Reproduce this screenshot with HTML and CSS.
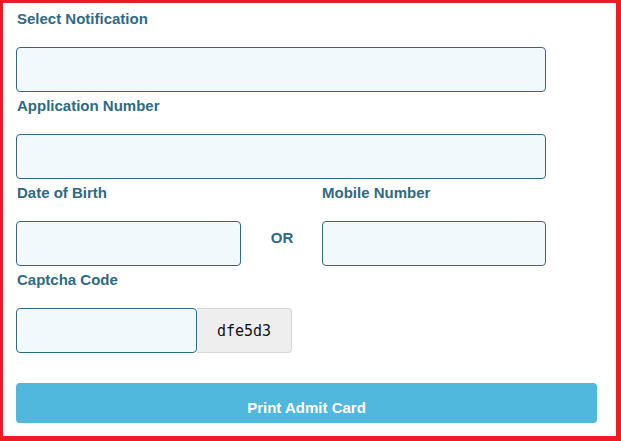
FILE: index.html
```html
<!DOCTYPE html>
<html>
<head>
<meta charset="utf-8">
<link rel="stylesheet" href="styles.css">
</head>
<body>
<div class="frame">
  <form class="form">
    <div class="group">
      <label class="label">Select Notification</label>
      <div class="field field-wide"></div>
    </div>
    <div class="group">
      <label class="label">Application Number</label>
      <div class="field field-wide"></div>
    </div>
    <div class="split">
      <div class="group">
        <label class="label">Date of Birth</label>
        <div class="field"></div>
      </div>
      <div class="or">OR</div>
      <div class="group">
        <label class="label label-flush">Mobile Number</label>
        <div class="field"></div>
      </div>
    </div>
    <div class="group">
      <label class="label">Captcha Code</label>
      <div class="captcha-row">
        <div class="field field-captcha"></div>
        <div class="captcha">dfe5d3</div>
      </div>
    </div>
    <button type="button" class="submit">Print Admit Card</button>
  </form>
</div>
</body>
</html>
```

FILE: styles.css
```css
* { box-sizing: border-box; }
html, body { margin: 0; padding: 0; background: #ffffff; }
body { width: 621px; height: 441px; overflow: hidden; }

.frame {
  width: 621px;
  height: 441px;
  border-style: solid;
  border-color: #ec1c24;
  border-width: 3px 5px 5px 3px;
  background: #ffffff;
  padding: 5px 0 0 13px;
  font-family: "Liberation Sans", Arial, sans-serif;
}

.form { display: flex; flex-direction: column; width: 581px; }

.group { display: flex; flex-direction: column; margin-bottom: 3px; }

.label {
  display: block;
  font-size: 15px;
  font-weight: bold;
  line-height: 22px;
  color: #2e6a85;
  padding-left: 1px;
  margin-bottom: 17px;
}

.label-flush { padding-left: 0; }

.field {
  height: 45px;
  border: 1px solid #2f6a82;
  border-radius: 4px;
  background: #f2f9fd;
}

.field-wide { width: 530px; }

.split {
  display: grid;
  grid-template-columns: 225px 81px 224px;
  width: 530px;
}

.or {
  font-size: 15px;
  font-weight: bold;
  color: #2e6a85;
  text-align: center;
  padding-top: 47px;
  padding-left: 1px;
}

.captcha-row { display: flex; }

.field-captcha { width: 181px; }

.captcha {
  width: 95px;
  height: 45px;
  background: #eeeeee;
  border: 1px solid #d6d6d6;
  border-radius: 0 4px 4px 0;
  border-left: none;
  display: flex;
  align-items: center;
  justify-content: center;
  font-family: "DejaVu Sans Mono", "Liberation Mono", monospace;
  font-size: 15px;
  color: #111111;
}

.submit {
  margin-top: 27px;
  width: 581px;
  height: 40px;
  border: none;
  border-radius: 4px;
  background: #4fb8dc;
  color: #ffffff;
  font-family: "Liberation Sans", Arial, sans-serif;
  font-size: 15px;
  font-weight: bold;
  padding-top: 9px;
}
```
